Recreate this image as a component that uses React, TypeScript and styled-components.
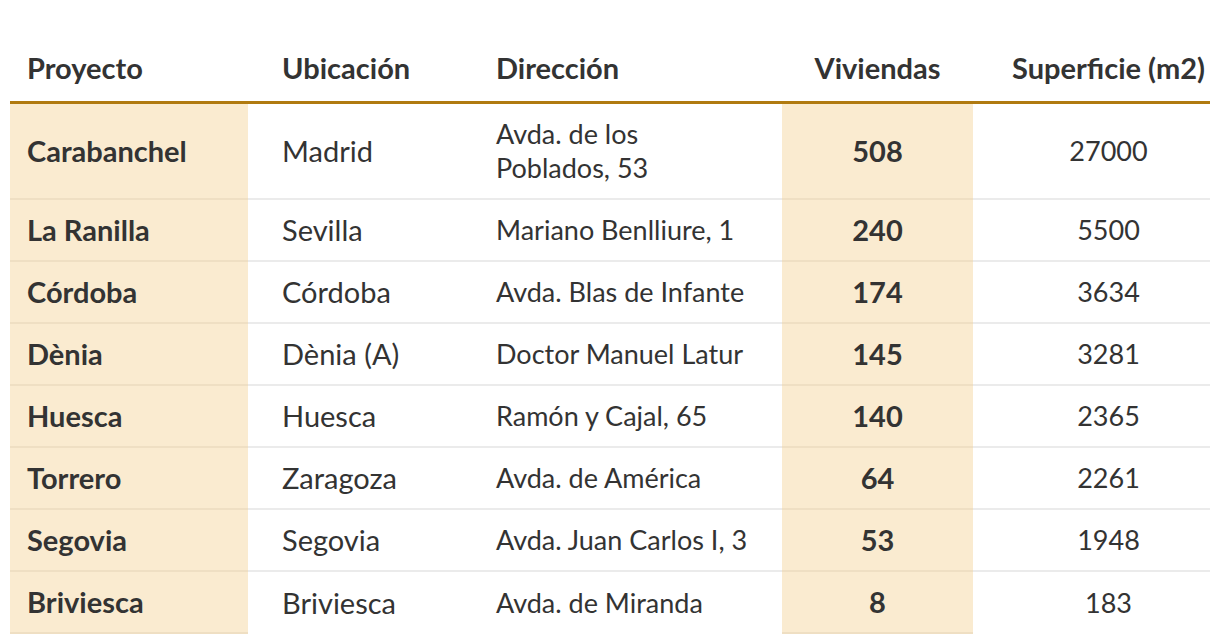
import styled, { createGlobalStyle } from "styled-components";

const GlobalStyle = createGlobalStyle`
  body {
    margin: 0;
    background: #fff;
    font-family: "Lato", "Noto Sans", sans-serif;
    color: #333;
  }
`;

const Page = styled.div`
  padding: 28px 10px 0;
`;

const Table = styled.table`
  width: 1200px;
  border-collapse: collapse;
  table-layout: fixed;
`;

const HeadCell = styled.th<{ $align?: string; $left?: number; $right?: number }>`
  font-size: 29px;
  font-weight: 700;
  color: #333;
  text-align: ${(p) => p.$align || "left"};
  padding: 0 ${(p) => p.$right ?? 0}px 16px ${(p) => p.$left ?? 17}px;
  border-bottom: 3px solid #b07a10;
  height: 57px;
  vertical-align: bottom;
  white-space: nowrap;
`;

const Row = styled.tr`
  border-bottom: 2px solid #ebebeb;

  &:last-child {
    border-bottom: none;
  }
`;

const Cell = styled.td<{
  $highlight?: boolean;
  $bold?: boolean;
  $small?: boolean;
  $align?: string;
  $left?: number;
  $right?: number;
}>`
  background: ${(p) => (p.$highlight ? "#faebd0" : "transparent")};
  font-size: ${(p) => (p.$small ? 27 : 29)}px;
  font-weight: ${(p) => (p.$bold ? 700 : 400)};
  text-align: ${(p) => p.$align || "left"};
  padding: 13px ${(p) => p.$right ?? 17}px 13px ${(p) => p.$left ?? 17}px;
  line-height: 34px;
  height: 34px;
  vertical-align: middle;
  white-space: pre-line;
  ${(p) => (p.$highlight ? "border-bottom: 2px solid #efdfc3;" : "")}
`;

const rows = [
  ["Carabanchel", "Madrid", "Avda. de los\nPoblados, 53", "508", "27000"],
  ["La Ranilla", "Sevilla", "Mariano Benlliure, 1", "240", "5500"],
  ["Córdoba", "Córdoba", "Avda. Blas de Infante", "174", "3634"],
  ["Dènia", "Dènia (A)", "Doctor Manuel Latur", "145", "3281"],
  ["Huesca", "Huesca", "Ramón y Cajal, 65", "140", "2365"],
  ["Torrero", "Zaragoza", "Avda. de América", "64", "2261"],
  ["Segovia", "Segovia", "Avda. Juan Carlos I, 3", "53", "1948"],
  ["Briviesca", "Briviesca", "Avda. de Miranda", "8", "183"],
];

export default function App() {
  return (
    <Page>
      <GlobalStyle />
      <Table>
        <colgroup>
          <col style={{ width: 238 }} />
          <col style={{ width: 231 }} />
          <col style={{ width: 303 }} />
          <col style={{ width: 191 }} />
          <col style={{ width: 237 }} />
        </colgroup>
        <thead>
          <tr>
            <HeadCell>Proyecto</HeadCell>
            <HeadCell $left={34}>Ubicación</HeadCell>
            <HeadCell>Dirección</HeadCell>
            <HeadCell $align="center" $left={0}>Viviendas</HeadCell>
            <HeadCell $align="center" $left={34}>Superficie (m2)</HeadCell>
          </tr>
        </thead>
        <tbody>
          {rows.map((r) => (
            <Row key={r[0]}>
              <Cell $highlight $bold>{r[0]}</Cell>
              <Cell $left={34}>{r[1]}</Cell>
              <Cell $small>{r[2]}</Cell>
              <Cell $highlight $bold $align="center">{r[3]}</Cell>
              <Cell $small $align="center" $left={34} $right={0}>{r[4]}</Cell>
            </Row>
          ))}
        </tbody>
      </Table>
    </Page>
  );
}
